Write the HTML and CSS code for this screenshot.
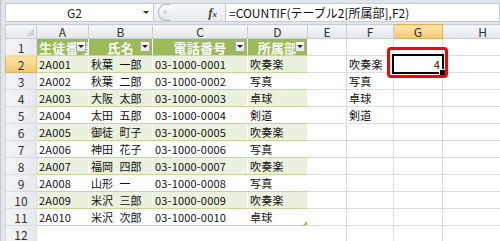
FILE: index.html
```html
<!DOCTYPE html>
<html lang="ja">
<head>
    <meta charset="UTF-8" />
    <title>COUNTIF</title>
    <link rel="stylesheet" href="styles.css">
</head>
<body>
    <div class="window">
        <div class="formula-bar">
            <div class="namebox">
                <span class="cellref">G2</span>
                <span class="nb-arrow"></span>
            </div>
            <div class="fx-area">
                <span class="grip"></span>
                <span class="fx"><i>f</i><small>x</small></span>
            </div>
            <div class="formula">=COUNTIF(テーブル2[所属部],F2)</div>
        </div>

        <div class="sheet">
            <table class="grid">
                <colgroup>
                    <col class="c-hdr"><col class="c-a"><col class="c-b"><col class="c-c"><col class="c-d">
                    <col class="c-e"><col class="c-f"><col class="c-g"><col class="c-h">
                </colgroup>
                <tr class="col-heads">
                    <th class="corner"><span class="tri"></span></th>
                    <th>A</th><th>B</th><th>C</th><th>D</th><th>E</th><th>F</th><th class="sel">G</th><th>H</th>
                </tr>
                <tr class="thead">
                    <th class="rh">1</th>
                    <td class="th left">生徒番号<span class="dd"></span></td>
                    <td class="th">氏名<span class="dd"></span></td>
                    <td class="th">電話番号<span class="dd"></span></td>
                    <td class="th">所属部<span class="dd"></span></td>
                    <td></td><td></td><td></td><td></td>
                </tr>
                <tr class="band">
                    <th class="rh sel">2</th>
                    <td>2A001</td><td class="name">秋葉 一郎</td><td>03-1000-0001</td><td>吹奏楽</td>
                    <td></td><td>吹奏楽</td>
                    <td class="active num">4<span class="cursor"></span><span class="mark"></span></td>
                    <td></td>
                </tr>
                <tr>
                    <th class="rh">3</th>
                    <td>2A002</td><td class="name">秋葉 二郎</td><td>03-1000-0002</td><td>写真</td>
                    <td></td><td>写真</td><td></td><td></td>
                </tr>
                <tr class="band">
                    <th class="rh">4</th>
                    <td>2A003</td><td class="name">大阪 太郎</td><td>03-1000-0003</td><td>卓球</td>
                    <td></td><td>卓球</td><td></td><td></td>
                </tr>
                <tr>
                    <th class="rh">5</th>
                    <td>2A004</td><td class="name">太田 五郎</td><td>03-1000-0004</td><td>剣道</td>
                    <td></td><td>剣道</td><td></td><td></td>
                </tr>
                <tr class="band">
                    <th class="rh">6</th>
                    <td>2A005</td><td class="name">御徒 町子</td><td>03-1000-0005</td><td>吹奏楽</td>
                    <td></td><td></td><td></td><td></td>
                </tr>
                <tr>
                    <th class="rh">7</th>
                    <td>2A006</td><td class="name">神田 花子</td><td>03-1000-0006</td><td>写真</td>
                    <td></td><td></td><td></td><td></td>
                </tr>
                <tr class="band">
                    <th class="rh">8</th>
                    <td>2A007</td><td class="name">福岡 四郎</td><td>03-1000-0007</td><td>吹奏楽</td>
                    <td></td><td></td><td></td><td></td>
                </tr>
                <tr>
                    <th class="rh">9</th>
                    <td>2A008</td><td class="name">山形 一</td><td>03-1000-0008</td><td>写真</td>
                    <td></td><td></td><td></td><td></td>
                </tr>
                <tr class="band">
                    <th class="rh">10</th>
                    <td>2A009</td><td class="name">米沢 三郎</td><td>03-1000-0009</td><td>吹奏楽</td>
                    <td></td><td></td><td></td><td></td>
                </tr>
                <tr class="last">
                    <th class="rh">11</th>
                    <td>2A010</td><td class="name">米沢 次郎</td><td>03-1000-0010</td><td>卓球<span class="resize"></span></td>
                    <td></td><td></td><td></td><td></td>
                </tr>
                <tr>
                    <th class="rh">12</th>
                    <td></td><td></td><td></td><td></td><td></td><td></td><td></td><td></td>
                </tr>
            </table>
        </div>
    </div>
</body>
</html>
```

FILE: styles.css
```css
body {
    margin: 0;
    background: #fff;
    font-family: "Noto Sans CJK JP", "Liberation Sans", sans-serif;
}
.window {
    width: 500px;
    height: 241px;
    overflow: hidden;
    box-sizing: border-box;
    padding: 3px 0 0 4px;
    background: #e1e5ea;
    border-left: 1px solid #c2c8d0;
}
.formula-bar {
    display: flex;
    height: 19px;
    margin-bottom: 2px;
}
.namebox {
    width: 149px;
    display: flex;
    align-items: center;
    background: #fff;
    border: 1px solid #c6ccd4;
    box-sizing: border-box;
}
.cellref {
    flex: 1;
    text-align: center;
    font-size: 12px;
    color: #222;
}
.nb-arrow {
    width: 0;
    height: 0;
    margin-right: 4px;
    border-left: 3px solid transparent;
    border-right: 3px solid transparent;
    border-top: 3px solid #333;
}
.fx-area {
    width: 71px;
    display: flex;
    align-items: center;
    background: linear-gradient(#f7f8fa, #e8ebef);
    border-top: 1px solid #c6ccd4;
    border-bottom: 1px solid #c6ccd4;
    box-sizing: border-box;
}
.grip {
    width: 11px;
    height: 15px;
    margin-left: 4px;
    border: 1px solid #b4bac2;
    border-right: none;
    border-radius: 8px 0 0 8px;
    background: radial-gradient(circle at 6px 7px, #d0d4da 1.5px, transparent 2px), linear-gradient(#fdfdfe, #e1e4e8);
}
.fx {
    margin-left: auto;
    margin-right: 8px;
    font-family: "Liberation Serif", serif;
    font-weight: bold;
    color: #444;
    font-size: 13px;
}
.fx small {
    font-size: 9px;
    font-style: italic;
}
.formula {
    flex: 1;
    background: #fff;
    border: 1px solid #c6ccd4;
    box-sizing: border-box;
    padding-left: 3px;
    font-size: 12px;
    line-height: 17px;
    color: #111;
    white-space: nowrap;
}
.sheet {
    background: #fff;
    overflow: hidden;
}
.grid {
    border-collapse: collapse;
    table-layout: fixed;
    width: 517px;
    font-size: 11px;
    color: #111;
}
.c-hdr { width: 31px; }
.c-a { width: 52px; }
.c-b { width: 64px; }
.c-c { width: 95px; }
.c-d { width: 60px; }
.c-e { width: 39px; }
.c-f { width: 47px; }
.c-g { width: 49px; }
.c-h { width: 80px; }
.grid td,
.grid th {
    height: 16px;
    padding: 0 2px;
    border: 1px solid #dadcdd;
    white-space: nowrap;
    overflow: hidden;
    line-height: 15px;
}
.grid td {
    text-align: left;
    letter-spacing: 0.2px;
}
.grid td.name {
    word-spacing: 4px;
    letter-spacing: 0;
}
.col-heads th {
    height: 13px;
    line-height: 13px;
    font-weight: normal;
    font-size: 12px;
    color: #333;
    background: linear-gradient(#f6f7f9, #e3e6ea);
    border-color: #c9ced5;
}
.col-heads th.sel,
.rh.sel {
    background: linear-gradient(#fbe6a8, #f3c86e);
    border-color: #e0b35a;
}
.corner {
    position: relative;
}
.tri {
    position: absolute;
    right: 2px;
    bottom: 2px;
    width: 0;
    height: 0;
    border-left: 8px solid transparent;
    border-bottom: 8px solid #d1d5da;
}
.rh {
    font-weight: normal;
    font-size: 12px;
    text-align: center;
    color: #333;
    background: linear-gradient(90deg, #f3f4f6, #e6e8ec);
    border-color: #c9ced5;
}
.th {
    position: relative;
    background: #9bbb59;
    color: #fff;
    font-weight: bold;
    font-size: 13px;
    text-align: center !important;
    padding: 0;
    letter-spacing: 0;
    border-color: #c3d69b #e4ecd3;
}
.th.left {
    text-align: left !important;
}
.dd {
    position: absolute;
    right: 2px;
    top: 2px;
    width: 10px;
    height: 11px;
    box-sizing: border-box;
    border: 1px solid #a8aeb6;
    background: linear-gradient(#ffffff, #e2e5e9);
}
.dd::after {
    content: "";
    position: absolute;
    left: 1px;
    top: 3px;
    border-left: 3px solid transparent;
    border-right: 3px solid transparent;
    border-top: 3px solid #222;
}
.band td:nth-child(-n+5) {
    background: #ebf1de;
}
.grid tr:not(.col-heads) td:nth-child(-n+5) {
    border-top-color: #c4d79b;
    border-bottom-color: #c4d79b;
    border-left-color: #fff;
    border-right-color: #fff;
}
.grid tr td:nth-child(2) {
    border-left-color: #dadcdd;
}
.grid tr td:nth-child(5) {
    border-right-color: #dadcdd;
}
.num {
    text-align: right !important;
}
.active {
    position: relative;
    overflow: visible !important;
    padding-right: 5px;
}
.cursor {
    position: absolute;
    left: -2px;
    top: -2px;
    right: -2px;
    bottom: -2px;
    border: 2px solid #000;
}
.cursor::after {
    content: "";
    position: absolute;
    right: -4px;
    bottom: -4px;
    width: 5px;
    height: 5px;
    background: #000;
    border: 1px solid #fff;
}
.mark {
    position: absolute;
    left: -7px;
    top: -9px;
    width: 55px;
    height: 25px;
    border: 3px solid #f00;
    border-radius: 4px;
}
.last td:nth-child(5) {
    position: relative;
}
.resize {
    position: absolute;
    right: 0;
    bottom: 0;
    width: 0;
    height: 0;
    border-left: 4px solid transparent;
    border-bottom: 4px solid #9bbb59;
}
```
